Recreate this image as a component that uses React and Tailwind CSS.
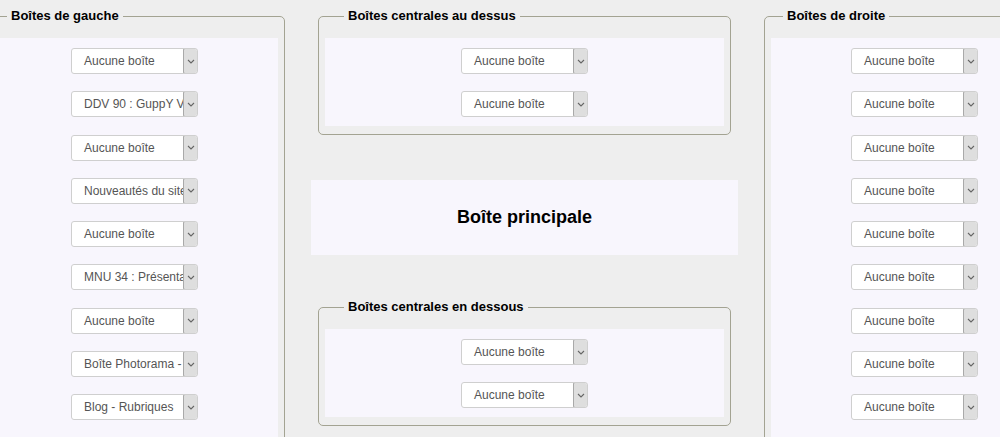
import React from 'react';

const leftBoxes = [
  'Aucune boîte',
  'DDV 90 : GuppY V6.00',
  'Aucune boîte',
  'Nouveautés du site',
  'Aucune boîte',
  'MNU 34 : Présentation',
  'Aucune boîte',
  'Boîte Photorama - Tout',
  'Blog - Rubriques',
];

const rightBoxes = Array(9).fill('Aucune boîte');

const Chevron = () => (
  <svg width="8" height="5" viewBox="0 0 8 5" fill="none">
    <path d="M1 1l3 3 3-3" stroke="#666" strokeWidth="1.1" />
  </svg>
);

const BoxSelect = ({ label }) => (
  <div className="flex h-[26px] w-[127px] bg-white border border-[#cfcfcf] rounded-[3px] overflow-hidden">
    <span className="flex-1 min-w-0 overflow-hidden whitespace-nowrap pl-[12px] text-[12px] leading-[24px] text-[#555]">
      {label}
    </span>
    <span className="flex w-[15px] shrink-0 items-center justify-center bg-[#dedede] border border-[#a9a9a9] rounded-[2px] -my-px -mr-px">
      <Chevron />
    </span>
  </div>
);

const Group = ({ title, legendClass, items, gap, innerClass = 'pb-[9px]', className = '' }) => (
  <fieldset className={`border border-[#a3a392] rounded-[5px] px-[6px] pt-[14px] pb-[8px] ${className}`}>
    <legend className={`px-[4px] text-[13px] leading-[16px] font-bold text-black ${legendClass}`}>{title}</legend>
    <div className={`flex flex-col items-center bg-[#f8f6fd] pt-[10px] ${gap} ${innerClass}`}>
      {items.map((label, i) => (
        <BoxSelect key={i} label={label} />
      ))}
    </div>
  </fieldset>
);

export default function App() {
  return (
    <div className="w-[1000px] h-[437px] overflow-hidden bg-[#eeeeee] pt-[8px]" style={{ fontFamily: '"Liberation Sans", Arial, sans-serif' }}>
      <div className="flex gap-[26px] -ml-[16px] w-[1081px]">
        {/* Left column */}
        <div className="w-[301px] shrink-0">
          <Group title="Boîtes de gauche" legendClass="ml-[16px]" items={leftBoxes} gap="gap-[17.3px]" innerClass="pb-[40px]" />
        </div>

        {/* Center column */}
        <div className="w-[427px] shrink-0 flex flex-col">
          <Group
            title="Boîtes centrales au dessus"
            legendClass="ml-[19px]"
            items={['Aucune boîte', 'Aucune boîte']}
            gap="gap-[17px]"
            className="mx-[7px]"
          />
          <div className="mt-[45px] h-[75px] bg-[#f8f6fd] flex items-center justify-center">
            <h2 className="text-[18px] font-bold text-black">Boîte principale</h2>
          </div>
          <Group
            title="Boîtes centrales en dessous"
            legendClass="ml-[19px]"
            items={['Aucune boîte', 'Aucune boîte']}
            gap="gap-[17px]"
            className="mx-[7px] mt-[44px]"
          />
        </div>

        {/* Right column */}
        <div className="w-[301px] shrink-0">
          <Group title="Boîtes de droite" legendClass="ml-[12px]" items={rightBoxes} gap="gap-[17.3px]" innerClass="pb-[40px]" />
        </div>
      </div>
    </div>
  );
}
